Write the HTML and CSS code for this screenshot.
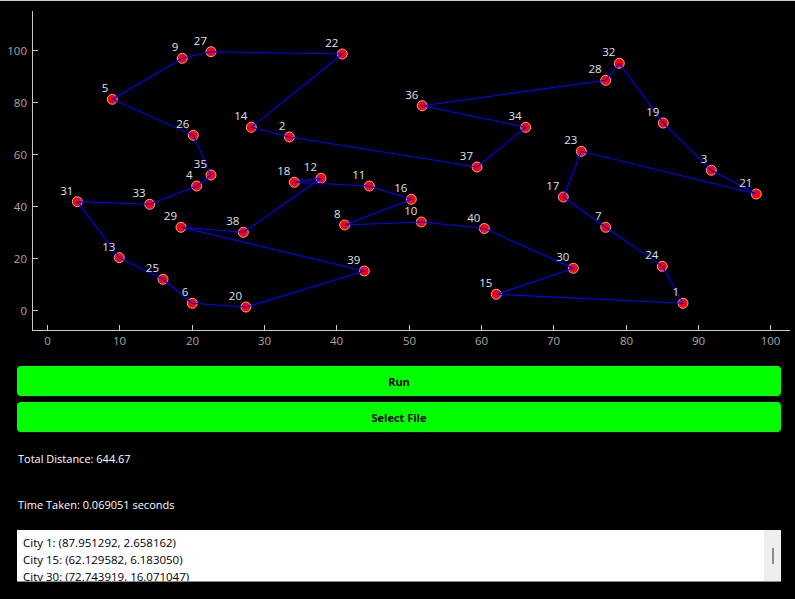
FILE: index.html
```html
<!DOCTYPE html>
<html>
<head>
<meta charset="utf-8">
<link rel="stylesheet" href="styles.css">
</head>
<body>
<div class="app">
  <div class="chart">
    <svg class="plot" width="795" height="356" viewBox="0 0 795 356">
      <rect x="0" y="0" width="795" height="1" fill="#d0d0d0"/>
      <g class="axes" stroke="#c8c8c8" stroke-width="1" fill="none">
        <line x1="32.5" y1="11" x2="32.5" y2="330.5"/>
        <line x1="32" y1="330.5" x2="790" y2="330.5"/>
        <line x1="33" y1="310.5" x2="38" y2="310.5"/>
        <line x1="33" y1="258.5" x2="38" y2="258.5"/>
        <line x1="33" y1="206.5" x2="38" y2="206.5"/>
        <line x1="33" y1="154.5" x2="38" y2="154.5"/>
        <line x1="33" y1="102.5" x2="38" y2="102.5"/>
        <line x1="33" y1="50.5" x2="38" y2="50.5"/>
        <line x1="47.5" y1="325" x2="47.5" y2="330"/>
        <line x1="119.5" y1="325" x2="119.5" y2="330"/>
        <line x1="192.5" y1="325" x2="192.5" y2="330"/>
        <line x1="264.5" y1="325" x2="264.5" y2="330"/>
        <line x1="336.5" y1="325" x2="336.5" y2="330"/>
        <line x1="409.5" y1="325" x2="409.5" y2="330"/>
        <line x1="481.5" y1="325" x2="481.5" y2="330"/>
        <line x1="553.5" y1="325" x2="553.5" y2="330"/>
        <line x1="626.5" y1="325" x2="626.5" y2="330"/>
        <line x1="698.5" y1="325" x2="698.5" y2="330"/>
        <line x1="770.5" y1="325" x2="770.5" y2="330"/>
      </g>
      <g class="ticklabels ylabels">
        <text x="27" y="315">0</text>
        <text x="27" y="263">20</text>
        <text x="27" y="211">40</text>
        <text x="27" y="159">60</text>
        <text x="27" y="107">80</text>
        <text x="27" y="55">100</text>
      </g>
      <g class="ticklabels xlabels">
        <text x="47.5" y="345">0</text>
        <text x="119.5" y="345">10</text>
        <text x="192.5" y="345">20</text>
        <text x="264.5" y="345">30</text>
        <text x="336.5" y="345">40</text>
        <text x="409.5" y="345">50</text>
        <text x="481.5" y="345">60</text>
        <text x="553.5" y="345">70</text>
        <text x="626.5" y="345">80</text>
        <text x="698.5" y="345">90</text>
        <text x="770.5" y="345">100</text>
      </g>
      <g class="nodes">
        <circle cx="683" cy="303.3" r="5"/>
        <circle cx="289.3" cy="137" r="5"/>
        <circle cx="711.3" cy="170.3" r="5"/>
        <circle cx="196.7" cy="186" r="5"/>
        <circle cx="112.3" cy="99.3" r="5"/>
        <circle cx="192.3" cy="303.3" r="5"/>
        <circle cx="605.7" cy="227.3" r="5"/>
        <circle cx="344.7" cy="225" r="5"/>
        <circle cx="182.3" cy="58.3" r="5"/>
        <circle cx="421.3" cy="222" r="5"/>
        <circle cx="369.3" cy="186" r="5"/>
        <circle cx="321" cy="178.3" r="5"/>
        <circle cx="119.3" cy="257.7" r="5"/>
        <circle cx="251.3" cy="127.3" r="5"/>
        <circle cx="496.3" cy="294.3" r="5"/>
        <circle cx="411.3" cy="199.3" r="5"/>
        <circle cx="563.3" cy="197" r="5"/>
        <circle cx="294.3" cy="182.3" r="5"/>
        <circle cx="663.3" cy="123" r="5"/>
        <circle cx="246" cy="307" r="5"/>
        <circle cx="756.3" cy="194" r="5"/>
        <circle cx="342.3" cy="54" r="5"/>
        <circle cx="581.3" cy="151.3" r="5"/>
        <circle cx="662.3" cy="266.3" r="5"/>
        <circle cx="163" cy="279.3" r="5"/>
        <circle cx="193.3" cy="135.3" r="5"/>
        <circle cx="211" cy="51.7" r="5"/>
        <circle cx="605.7" cy="80.3" r="5"/>
        <circle cx="181" cy="227.3" r="5"/>
        <circle cx="573.3" cy="268.3" r="5"/>
        <circle cx="77.3" cy="201.7" r="5"/>
        <circle cx="619.3" cy="63.3" r="5"/>
        <circle cx="149.7" cy="204.3" r="5"/>
        <circle cx="525.7" cy="127.3" r="5"/>
        <circle cx="211" cy="175" r="5"/>
        <circle cx="422.3" cy="105.7" r="5"/>
        <circle cx="477" cy="167" r="5"/>
        <circle cx="243.3" cy="232.3" r="5"/>
        <circle cx="364.3" cy="271" r="5"/>
        <circle cx="484.3" cy="228.5" r="5"/>
      </g>
      <polygon class="tour" points="683,303.3 496.3,294.3 573.3,268.3 484.3,228.5 421.3,222 344.7,225 411.3,199.3 369.3,186 294.3,182.3 321,178.3 243.3,232.3 181,227.3 364.3,271 246,307 192.3,303.3 163,279.3 119.3,257.7 77.3,201.7 149.7,204.3 196.7,186 211,175 193.3,135.3 112.3,99.3 182.3,58.3 211,51.7 342.3,54 251.3,127.3 289.3,137 477,167 525.7,127.3 422.3,105.7 605.7,80.3 619.3,63.3 663.3,123 711.3,170.3 756.3,194 581.3,151.3 563.3,197 605.7,227.3 662.3,266.3"/>
      <g class="labels">
        <text x="679" y="296.3">1</text>
        <text x="285.3" y="130">2</text>
        <text x="707.3" y="163.3">3</text>
        <text x="192.7" y="179">4</text>
        <text x="108.3" y="92.3">5</text>
        <text x="188.3" y="296.3">6</text>
        <text x="601.7" y="220.3">7</text>
        <text x="340.7" y="218">8</text>
        <text x="178.3" y="51.3">9</text>
        <text x="417.3" y="215">10</text>
        <text x="365.3" y="179">11</text>
        <text x="317" y="171.3">12</text>
        <text x="115.3" y="250.7">13</text>
        <text x="247.3" y="120.3">14</text>
        <text x="492.3" y="287.3">15</text>
        <text x="407.3" y="192.3">16</text>
        <text x="559.3" y="190">17</text>
        <text x="290.3" y="175.3">18</text>
        <text x="659.3" y="116">19</text>
        <text x="242" y="300">20</text>
        <text x="752.3" y="187">21</text>
        <text x="338.3" y="47">22</text>
        <text x="577.3" y="144.3">23</text>
        <text x="658.3" y="259.3">24</text>
        <text x="159" y="272.3">25</text>
        <text x="189.3" y="128.3">26</text>
        <text x="207" y="44.7">27</text>
        <text x="601.7" y="73.3">28</text>
        <text x="177" y="220.3">29</text>
        <text x="569.3" y="261.3">30</text>
        <text x="73.3" y="194.7">31</text>
        <text x="615.3" y="56.3">32</text>
        <text x="145.7" y="197.3">33</text>
        <text x="521.7" y="120.3">34</text>
        <text x="207" y="168">35</text>
        <text x="418.3" y="98.7">36</text>
        <text x="473" y="160">37</text>
        <text x="239.3" y="225.3">38</text>
        <text x="360.3" y="264">39</text>
        <text x="480.3" y="221.5">40</text>
      </g>
    </svg>
  </div>
  <div class="panel">
    <div class="buttons">
      <button class="btn">Run</button>
      <button class="btn">Select File</button>
    </div>
    <p class="stat stat-distance">Total Distance: 644.67</p>
    <p class="stat stat-time">Time Taken: 0.069051 seconds</p>
    <div class="output">
      <div class="output-text">
        <div class="line">City 1: (87.951292, 2.658162)</div>
        <div class="line">City 15: (62.129582, 6.183050)</div>
        <div class="line">City 30: (72.743919, 16.071047)</div>
      </div>
      <div class="scrollbar"><div class="thumb"></div></div>
    </div>
  </div>
</div>
</body>
</html>
```
FILE: styles.css
```css
html, body {
  margin: 0;
  padding: 0;
  background: #000;
}
body {
  width: 795px;
  height: 599px;
  overflow: hidden;
  font-family: "Open Sans", "Noto Sans", sans-serif;
  font-size: 11px;
  color: #fff;
}
.app {
  display: flex;
  flex-direction: column;
}
.chart {
  height: 356px;
}
.plot {
  display: block;
}
.ticklabels text {
  font-family: "Open Sans", "Noto Sans", sans-serif;
  font-size: 11.5px;
  fill: #a8a8a8;
}
.ylabels text {
  text-anchor: end;
}
.xlabels text {
  text-anchor: middle;
}
.nodes circle {
  fill: #ff0000;
  stroke: #f2b8b8;
  stroke-width: 0.9;
}
.tour {
  fill: none;
  stroke: #0000ff;
  stroke-width: 1.1;
}
.labels text {
  font-family: "Open Sans", "Noto Sans", sans-serif;
  font-size: 11.5px;
  fill: #dde3ea;
  text-anchor: end;
}
.panel {
  display: flex;
  flex-direction: column;
  padding: 10px 14px 0 17px;
}
.buttons {
  display: flex;
  flex-direction: column;
  gap: 6px;
}
.btn {
  height: 30px;
  background: #00ff00;
  border: none;
  border-radius: 4px;
  font-family: "Open Sans", "Noto Sans", sans-serif;
  font-size: 11px;
  font-weight: 700;
  color: #000;
  padding: 0;
}
.stat {
  margin: 0;
  line-height: 16px;
  padding-left: 1px;
  color: #fff;
}
.stat-distance {
  margin-top: 19px;
}
.stat-time {
  margin-top: 30px;
}
.output {
  margin-top: 17px;
  height: 51px;
  background: #fff;
  border-bottom: 1px solid #8a8a8a;
  display: flex;
  overflow: hidden;
}
.output-text {
  flex: 1;
  padding: 4px 0 0 6px;
  color: #000;
  font-size: 11.5px;
  line-height: 17px;
  overflow: hidden;
}
.line {
  white-space: nowrap;
}
.scrollbar {
  width: 17px;
  background: #eeeeee;
  display: flex;
  justify-content: center;
  padding-top: 18px;
}
.thumb {
  width: 2px;
  height: 16px;
  background: #8a8a8a;
}
```
